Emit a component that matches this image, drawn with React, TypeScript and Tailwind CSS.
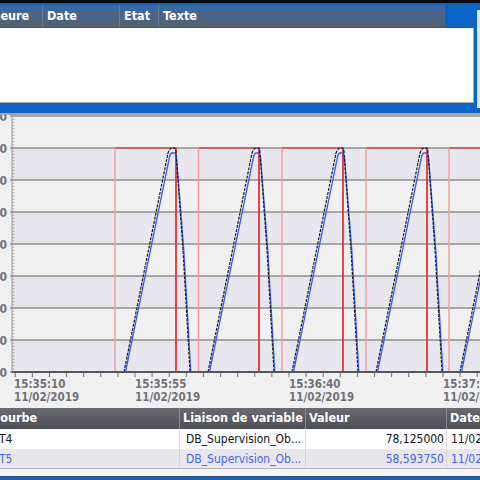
import React from "react";

const FONT = "'DejaVu Sans Condensed', 'DejaVu Sans', sans-serif";

function Chart() {
  const grid = [116, 148, 180, 212, 244, 276, 308, 340, 372];
  const bands = [0, 1, 2, 3, 4, 5, 6, 7];
  const yLabels = ["80", "70", "60", "50", "40", "30", "20", "10", "0"];
  const minor: number[] = [];
  for (let y = 116; y <= 372; y += 3.2) minor.push(y);
  const xt: number[] = [];
  for (let x = 135 - 17.11 * 7; x <= 480; x += 17.11) xt.push(x);
  const starts = [124, 208, 292, 376, 460];
  const rises = [115, 198.5, 282, 366, 449];
  const falls = [176, 259, 343, 427];
  const black = (b: number) =>
    `M${b},372 L${b + 44},153 Q${b + 46},148 ${b + 48},148 L${b + 50},148 Q${b + 52},148 ${b + 52},153 L${b + 59},250 L${b + 66},372`;
  const blue = (b: number) =>
    `M${b + 1.5},372 L${b + 45.5},157 Q${b + 46.5},153 ${b + 48},153 L${b + 51},153 L${b + 52.5},157 L${b + 59.8},250 L${b + 66.8},372`;
  return (
    <svg width={480} height={293} viewBox="0 115 480 293" className="block">
      <rect x={0} y={115} width={480} height={293} fill="#f0f0f0" />
      {bands.map((i) => (
        <rect key={i} x={12} y={116 + 32 * i} width={468} height={32} fill={i % 2 === 1 ? "#e7e7ed" : "#f1f1f1"} />
      ))}
      {grid.map((y) => (
        <line key={y} x1={10} x2={480} y1={y} y2={y} stroke="#8e8e8e" strokeWidth={1.3} />
      ))}
      <line x1={12} x2={12} y1={116} y2={372} stroke="#a0a0a0" strokeWidth={1} />
      {minor.map((y, i) => (
        <line key={i} x1={12} x2={14.5} y1={y} y2={y} stroke="#9a9a9a" strokeWidth={0.8} />
      ))}
      {yLabels.map((t, i) => (
        <text key={t} x={7} y={grid[i] + 4.5} textAnchor="end" fontFamily={FONT} fontWeight="bold" fontSize={12} fill="#707080">
          {t}
        </text>
      ))}
      {/* red square wave */}
      <path
        d={`M115,148 H176 V371 M198.5,148 H259 V371 M282,148 H343 V371 M366,148 H427 V371 M449,148 H480`}
        fill="none"
        stroke="#e6262b"
        strokeWidth={1.2}
      />
      {rises.map((x) => (
        <line key={x} x1={x} x2={x} y1={148} y2={371} stroke="#f39a9c" strokeWidth={1.4} />
      ))}
      {falls.map((x) => (
        <line key={x} x1={x} x2={x} y1={148} y2={371} stroke="#e6262b" strokeWidth={1.2} />
      ))}
      {starts.map((b) => (
        <path key={"b" + b} d={blue(b)} fill="none" stroke="#3b5ef0" strokeWidth={1.3} />
      ))}
      {starts.map((b) => (
        <path key={"k" + b} d={black(b)} fill="none" stroke="#1a1a2a" strokeWidth={1.2} strokeDasharray="3 1.2" />
      ))}
      {/* x axis */}
      <line x1={12} x2={480} y1={372} y2={372} stroke="#555560" strokeWidth={2.2} />
      {xt.map((x, i) => (
        <line key={i} x1={x} x2={x} y1={373} y2={377} stroke="#707070" strokeWidth={1} />
      ))}
      {[
        [14, "15:35:10"],
        [135, "15:35:55"],
        [289, "15:36:40"],
        [443, "15:37:25"],
      ].map(([x, t]) => (
        <g key={t as string}>
          <text x={x as number} y={388} fontFamily={FONT} fontWeight="bold" fontSize={11.5} fill="#70707a">
            {t}
          </text>
          <text x={x as number} y={400.5} fontFamily={FONT} fontWeight="bold" fontSize={11.5} fill="#70707a">
            11/02/2019
          </text>
        </g>
      ))}
    </svg>
  );
}

export default function App() {
  return (
    <div className="w-[480px] h-[480px] overflow-hidden bg-[#f0f0f0] flex flex-col" style={{ fontFamily: FONT }}>
      <div className="h-[3px] bg-[#0a0a0a] shrink-0" />
      <div className="h-[110px] bg-[#0a64c6] flex shrink-0">
        <div className="flex-1 flex flex-col pt-[2px]">
          <div className="h-[22px] w-[445px] bg-gradient-to-b from-[#3a67a6] to-[#56606c] flex items-center text-white font-bold text-[12.5px] overflow-hidden">
            <div className="w-[43px] shrink-0 h-full flex items-center border-r border-[#6a7a90] overflow-hidden">
              <span className="ml-[-9px]">Heure</span>
            </div>
            <div className="w-[77px] shrink-0 h-full flex items-center border-r border-[#6a7a90] pl-[4px]">Date</div>
            <div className="w-[39px] shrink-0 h-full flex items-center border-r border-[#6a7a90] pl-[4px]">Etat</div>
            <div className="flex-1 h-full flex items-center pl-[4px]">Texte</div>
          </div>
          <div className="h-[75px] w-[474px] bg-white border-r border-b border-[#a8a8b0] mt-[1px]" />
        </div>
        <div className="w-[3px] mt-[7px] h-[98px] bg-[#e2e2ea]" />
      </div>
      <div className="h-[2px] bg-[#a9a9ad] shrink-0" />
      <Chart />
      <div className="h-[21px] shrink-0 bg-gradient-to-b from-[#6a6a72] to-[#4e4e56] flex text-white font-bold text-[12.5px]">
        <div className="w-[180px] shrink-0 flex items-center border-r border-[#8a8a92] overflow-hidden">
          <span className="ml-[-8px]">Courbe</span>
        </div>
        <div className="w-[126px] shrink-0 flex items-center border-r border-[#8a8a92] pl-[3px]">Liaison de variable</div>
        <div className="w-[141px] shrink-0 flex items-center border-r border-[#8a8a92] pl-[3px]">Valeur</div>
        <div className="flex-1 flex items-center pl-[3px] whitespace-nowrap">Date</div>
      </div>
      <div className="h-[20px] shrink-0 bg-white flex text-[12px] text-[#111]">
        <div className="w-[180px] shrink-0 flex items-center border-r border-[#dcdce2] overflow-hidden">
          <span className="ml-[-1px]">T4</span>
        </div>
        <div className="w-[126px] shrink-0 flex items-center border-r border-[#dcdce2] pl-[6px] whitespace-nowrap overflow-hidden">DB_Supervision_Ob...</div>
        <div className="w-[141px] shrink-0 flex items-center justify-end border-r border-[#dcdce2] pr-[2px]">78,125000</div>
        <div className="flex-1 flex items-center pl-[4px] whitespace-nowrap overflow-hidden">11/02/2019</div>
      </div>
      <div className="h-[19px] shrink-0 bg-[#e7e7ed] flex text-[12px] text-[#3f68ee]">
        <div className="w-[180px] shrink-0 flex items-center border-r border-[#d4d4da] overflow-hidden">
          <span className="ml-[-1px]">T5</span>
        </div>
        <div className="w-[126px] shrink-0 flex items-center border-r border-[#d4d4da] pl-[6px] whitespace-nowrap overflow-hidden">DB_Supervision_Ob...</div>
        <div className="w-[141px] shrink-0 flex items-center justify-end border-r border-[#d4d4da] pr-[2px]">58,593750</div>
        <div className="flex-1 flex items-center pl-[4px] whitespace-nowrap overflow-hidden">11/02/2019</div>
      </div>
      <div className="h-[8px] shrink-0 bg-[#f4f4f6] border-t border-[#b4b4ba]" />
      <div className="flex-1 bg-[#0a64c6] border-t border-[#3a4a70]" />
    </div>
  );
}
